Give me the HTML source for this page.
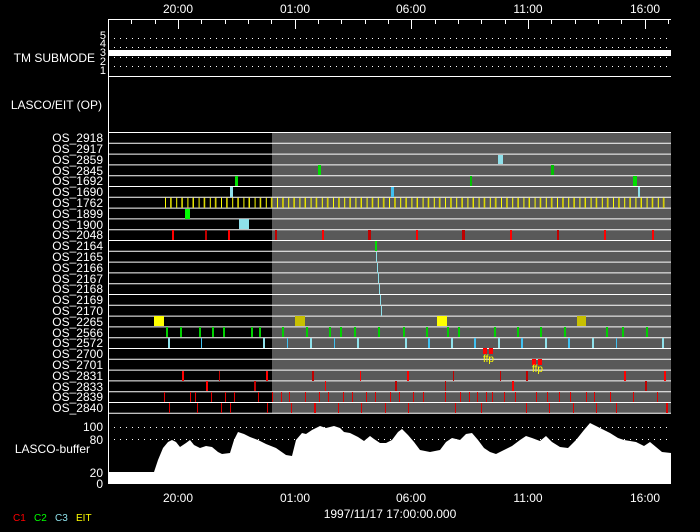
<!DOCTYPE html>
<html><head><style>
html,body{margin:0;padding:0;background:#000;width:700px;height:532px;overflow:hidden}
svg{display:block}
text{font-family:"Liberation Sans",sans-serif;fill:#fff;font-size:12px}
.l{text-anchor:end}
</style></head><body>
<svg width="700" height="532" viewBox="0 0 700 532" xmlns="http://www.w3.org/2000/svg">
<!-- gray region -->
<rect x="272" y="132" width="399" height="281" fill="#595959"/>
<!-- top axis labels -->
<text x="178" y="13" text-anchor="middle">20:00</text>
<text x="295" y="13" text-anchor="middle">01:00</text>
<text x="411" y="13" text-anchor="middle">06:00</text>
<text x="528" y="13" text-anchor="middle">11:00</text>
<text x="645" y="13" text-anchor="middle">16:00</text>
<!-- frame -->
<g stroke="#fff" stroke-width="1" fill="none">
<line x1="108.5" y1="19" x2="108.5" y2="484"/>
<line x1="108" y1="19.5" x2="671" y2="19.5"/>
<line x1="108" y1="76.5" x2="671" y2="76.5"/>
</g>
<!-- top ticks -->
<g stroke="#fff" stroke-width="1">
<path d="M131.5 19v5M155.5 19v5M178.5 19v10M201.5 19v5M225.5 19v5M248.5 19v5M271.5 19v5M295.5 19v10M318.5 19v5M341.5 19v5M365.5 19v5M388.5 19v5M411.5 19v10M435.5 19v5M458.5 19v5M481.5 19v5M505.5 19v5M528.5 19v10M551.5 19v5M575.5 19v5M598.5 19v5M621.5 19v5M645.5 19v10M668.5 19v5"/>
</g>
<!-- submode -->
<g stroke="#fff" stroke-width="1" stroke-dasharray="1 5">
<line x1="114" y1="38.5" x2="671" y2="38.5"/>
<line x1="114" y1="47.5" x2="671" y2="47.5"/>
<line x1="114" y1="57.5" x2="671" y2="57.5"/>
<line x1="114" y1="66.5" x2="671" y2="66.5"/>
</g>
<rect x="108" y="50" width="563" height="6" fill="#fff"/>
<text x="95" y="62" class="l">TM SUBMODE</text>
<g font-size="10">
<text x="106" y="39" class="l" style="font-size:11px">5</text>
<text x="106" y="47" class="l" style="font-size:11px">4</text>
<text x="106" y="56" class="l" style="font-size:11px">3</text>
<text x="106" y="65" class="l" style="font-size:11px">2</text>
<text x="106" y="74" class="l" style="font-size:11px">1</text>
</g>
<text x="102" y="109" class="l">LASCO/EIT (OP)</text>
<!-- row lines -->
<g stroke="#fff" stroke-width="1">
<path d="M108 132.5H671M108 143.3H671M108 154.1H671M108 164.9H671M108 175.7H671M108 186.5H671M108 197.3H671M108 208.1H671M108 218.9H671M108 229.7H671M108 240.5H671M108 251.3H671M108 262.1H671M108 272.9H671M108 283.7H671M108 294.5H671M108 305.3H671M108 316.1H671M108 326.9H671M108 337.7H671M108 348.5H671M108 359.3H671M108 370.1H671M108 380.9H671M108 391.7H671M108 402.5H671M108 413.3H671"/>
</g>
<!-- labels -->
<g class="l">
<text x="103" y="142" class="l">OS_2918</text>
<text x="103" y="153" class="l">OS_2917</text>
<text x="103" y="164" class="l">OS_2859</text>
<text x="103" y="175" class="l">OS_2845</text>
<text x="103" y="185" class="l">OS_1692</text>
<text x="103" y="196" class="l">OS_1690</text>
<text x="103" y="207" class="l">OS_1762</text>
<text x="103" y="218" class="l">OS_1899</text>
<text x="103" y="229" class="l">OS_1900</text>
<text x="103" y="239" class="l">OS_2048</text>
<text x="103" y="250" class="l">OS_2164</text>
<text x="103" y="261" class="l">OS_2165</text>
<text x="103" y="272" class="l">OS_2166</text>
<text x="103" y="283" class="l">OS_2167</text>
<text x="103" y="293" class="l">OS_2168</text>
<text x="103" y="304" class="l">OS_2169</text>
<text x="103" y="315" class="l">OS_2170</text>
<text x="103" y="326" class="l">OS_2265</text>
<text x="103" y="337" class="l">OS_2566</text>
<text x="103" y="347" class="l">OS_2572</text>
<text x="103" y="358" class="l">OS_2700</text>
<text x="103" y="369" class="l">OS_2701</text>
<text x="103" y="380" class="l">OS_2831</text>
<text x="103" y="391" class="l">OS_2833</text>
<text x="103" y="401" class="l">OS_2839</text>
<text x="103" y="412" class="l">OS_2840</text>
</g>
<!-- marks -->
<rect x="498" y="155" width="5" height="9" fill="#8ee0ea"/>
<rect x="318" y="165" width="3" height="10" fill="#00e000"/>
<rect x="551" y="165" width="3" height="10" fill="#00c000"/>
<rect x="235" y="176" width="3" height="10" fill="#00e000"/>
<rect x="470" y="176" width="2" height="10" fill="#00c000"/>
<rect x="633" y="176" width="4" height="10" fill="#00e000"/>
<rect x="230" y="187" width="3" height="10" fill="#8ee0ea"/>
<rect x="391" y="187" width="3" height="10" fill="#40c0f0"/>
<rect x="638" y="187" width="2" height="10" fill="#8ee0ea"/>
<line x1="165" y1="202.7" x2="668" y2="202.7" stroke="#ffff00" stroke-width="10" stroke-dasharray="1 4.6"/>
<line x1="170" y1="202.7" x2="668" y2="202.7" stroke="#c8c000" stroke-width="10" stroke-dasharray="1 10.2"/>
<rect x="185" y="209" width="5" height="10" fill="#00ff00"/>
<rect x="239" y="219" width="10" height="10" fill="#8ee0ea"/>
<g fill="#ff0000">
<rect x="172" y="230" width="2" height="10"/><rect x="205" y="230" width="2" height="10" fill="#c00000"/><rect x="228" y="230" width="2" height="10"/><rect x="275" y="230" width="2" height="10" fill="#c00000"/><rect x="322" y="230" width="2" height="10"/><rect x="368" y="230" width="3" height="10" fill="#c00000"/><rect x="416" y="230" width="2" height="10"/><rect x="462" y="230" width="3" height="10" fill="#c00000"/><rect x="510" y="230" width="2" height="10"/><rect x="557" y="230" width="2" height="10" fill="#c00000"/><rect x="604" y="230" width="2" height="10"/><rect x="652" y="230" width="2" height="10"/>
</g>
<rect x="375" y="241" width="2" height="10" fill="#00e000"/>
<g fill="#8ee0ea">
<rect x="376" y="252" width="1" height="10"/><rect x="377" y="263" width="1" height="10"/><rect x="378" y="273" width="1" height="10"/><rect x="379" y="284" width="1" height="10"/><rect x="380" y="295" width="1" height="10"/><rect x="381" y="306" width="1" height="10"/>
</g>
<rect x="154" y="316" width="10" height="10" fill="#ffff00"/>
<rect x="295" y="316" width="10" height="10" fill="#c8c000"/>
<rect x="437" y="316" width="10" height="10" fill="#ffff00"/>
<rect x="577" y="316" width="9" height="10" fill="#c8c000"/>
<g fill="#00d000">
<rect x="166" y="327" width="2" height="10"/><rect x="180" y="327" width="2" height="10"/><rect x="199" y="327" width="2" height="10"/><rect x="212" y="327" width="2" height="10"/><rect x="223" y="327" width="2" height="10"/><rect x="251" y="327" width="2" height="10"/><rect x="259" y="327" width="2" height="10"/><rect x="282" y="327" width="2" height="10"/><rect x="306" y="327" width="2" height="10"/><rect x="329" y="327" width="2" height="10"/><rect x="340" y="327" width="2" height="10"/><rect x="354" y="327" width="2" height="10"/><rect x="378" y="327" width="2" height="10"/><rect x="403" y="327" width="2" height="10"/><rect x="426" y="327" width="2" height="10"/><rect x="447" y="327" width="2" height="10"/><rect x="458" y="327" width="2" height="10"/><rect x="494" y="327" width="2" height="10"/><rect x="517" y="327" width="2" height="10"/><rect x="540" y="327" width="2" height="10"/><rect x="564" y="327" width="2" height="10"/><rect x="606" y="327" width="2" height="10"/><rect x="622" y="327" width="2" height="10"/><rect x="646" y="327" width="2" height="10"/>
</g>
<g fill="#8ee0ea">
<rect x="168" y="338" width="2" height="10"/><rect x="201" y="338" width="1" height="10" fill="#40c0f0"/><rect x="263" y="338" width="2" height="10"/><rect x="287" y="338" width="1" height="10" fill="#40c0f0"/><rect x="310" y="338" width="2" height="10"/><rect x="334" y="338" width="1" height="10" fill="#40c0f0"/><rect x="357" y="338" width="2" height="10"/><rect x="405" y="338" width="2" height="10"/><rect x="428" y="338" width="2" height="10" fill="#40c0f0"/><rect x="451" y="338" width="2" height="10"/><rect x="474" y="338" width="2" height="10" fill="#40c0f0"/><rect x="498" y="338" width="2" height="10"/><rect x="521" y="338" width="2" height="10" fill="#40c0f0"/><rect x="545" y="338" width="2" height="10"/><rect x="568" y="338" width="2" height="10" fill="#40c0f0"/><rect x="592" y="338" width="2" height="10"/><rect x="616" y="338" width="1" height="10" fill="#40c0f0"/><rect x="662" y="338" width="2" height="10"/>
</g>
<rect x="483" y="348" width="4" height="6" fill="#ff0000"/><rect x="489" y="348" width="4" height="6" fill="#ff0000"/>
<text x="483" y="362" style="fill:#ffff00;font-size:10px">ffp</text>
<rect x="532" y="359" width="4" height="6" fill="#ff0000"/><rect x="538" y="359" width="4" height="6" fill="#ff0000"/>
<text x="532" y="372" style="fill:#ffff00;font-size:10px">ffp</text>
<g fill="#ff0000">
<rect x="182" y="371" width="2" height="10"/><rect x="219" y="371" width="1" height="10" fill="#c00000"/><rect x="266" y="371" width="2" height="10"/><rect x="312" y="371" width="2" height="10" fill="#c00000"/><rect x="360" y="371" width="1" height="10"/><rect x="407" y="371" width="2" height="10"/><rect x="453" y="371" width="1" height="10" fill="#c00000"/><rect x="500" y="371" width="1" height="10" fill="#c00000"/><rect x="526" y="371" width="2" height="10" fill="#c00000"/><rect x="664" y="371" width="2" height="10"/><rect x="624" y="371" width="2" height="10" fill="#ff0000"/>
<rect x="206" y="381" width="2" height="10"/><rect x="254" y="381" width="2" height="10" fill="#c00000"/><rect x="325" y="381" width="1" height="10"/><rect x="395" y="381" width="2" height="10" fill="#c00000"/><rect x="445" y="381" width="1" height="10" fill="#c00000"/><rect x="512" y="381" width="2" height="10"/><rect x="645" y="381" width="2" height="10" fill="#c00000"/>
</g>
<g fill="#e00000">
<rect x="164" y="392" width="1" height="10"/><rect x="190" y="392" width="1" height="10"/><rect x="195" y="392" width="1" height="10"/><rect x="211" y="392" width="1" height="10"/><rect x="225" y="392" width="1" height="10"/><rect x="234" y="392" width="1" height="10"/><rect x="258" y="392" width="1" height="10"/><rect x="272" y="392" width="1" height="10"/><rect x="281" y="392" width="1" height="10"/><rect x="289" y="392" width="1" height="10"/><rect x="305" y="392" width="1" height="10"/><rect x="319" y="392" width="1" height="10"/><rect x="328" y="392" width="1" height="10"/><rect x="343" y="392" width="1" height="10"/><rect x="352" y="392" width="1" height="10"/><rect x="366" y="392" width="1" height="10"/><rect x="375" y="392" width="1" height="10"/><rect x="390" y="392" width="1" height="10"/><rect x="399" y="392" width="1" height="10"/><rect x="413" y="392" width="1" height="10"/><rect x="423" y="392" width="1" height="10"/><rect x="445" y="392" width="1" height="10"/><rect x="460" y="392" width="1" height="10"/><rect x="469" y="392" width="1" height="10"/><rect x="477" y="392" width="1" height="10"/><rect x="486" y="392" width="1" height="10"/><rect x="492" y="392" width="1" height="10"/><rect x="504" y="392" width="1" height="10"/><rect x="515" y="392" width="1" height="10"/><rect x="536" y="392" width="1" height="10"/><rect x="547" y="392" width="1" height="10"/><rect x="559" y="392" width="1" height="10"/><rect x="570" y="392" width="1" height="10"/><rect x="586" y="392" width="1" height="10"/><rect x="594" y="392" width="1" height="10"/><rect x="610" y="392" width="1" height="10"/><rect x="633" y="392" width="1" height="10"/><rect x="657" y="392" width="1" height="10"/>
<rect x="169" y="403" width="1" height="10"/><rect x="197" y="403" width="1" height="10"/><rect x="221" y="403" width="1" height="10"/><rect x="230" y="403" width="1" height="10"/><rect x="267" y="403" width="1" height="10"/><rect x="291" y="403" width="1" height="10"/><rect x="314" y="403" width="2" height="10"/><rect x="338" y="403" width="1" height="10"/><rect x="361" y="403" width="1" height="10"/><rect x="385" y="403" width="1" height="10"/><rect x="408" y="403" width="1" height="10"/><rect x="455" y="403" width="1" height="10"/><rect x="481" y="403" width="1" height="10"/><rect x="526" y="403" width="1" height="10"/><rect x="549" y="403" width="1" height="10"/><rect x="573" y="403" width="1" height="10"/><rect x="596" y="403" width="1" height="10"/><rect x="616" y="403" width="1" height="10"/><rect x="666" y="403" width="2" height="10"/>
</g>
<!-- buffer -->
<g stroke="#fff" stroke-width="1" stroke-dasharray="1 5">
<line x1="114" y1="427.5" x2="671" y2="427.5"/>
<line x1="114" y1="439.5" x2="671" y2="439.5"/>
</g>
<polygon fill="#fff" points="109,484 109,472 154,472 158,460 163,448 168,442 172,440 176,442 180,447 186,443 190,440 194,445 200,448 206,446 212,447 218,452 222,454 230,453 234,440 238,432 244,434 250,437 258,440 266,444 276,448 286,455 292,456 296,440 302,433 306,434 312,430 320,426 326,428 334,426 340,428 344,432 350,433 358,437 364,441 370,436 374,439 380,443 386,443 392,440 398,432 402,429 408,435 414,442 420,450 430,452 440,450 446,442 452,438 460,440 466,434 472,433 478,440 484,448 490,452 496,454 504,450 512,446 520,440 526,436 532,438 540,441 546,436 552,442 560,447 568,448 576,440 584,430 590,423 596,426 604,430 610,433 618,438 624,440 630,441 636,442 644,446 650,442 656,447 662,452 671,453 671,484"/>
<text x="103" y="431" class="l">100</text>
<text x="103" y="444" class="l">80</text>
<text x="90" y="453" class="l">LASCO-buffer</text>
<text x="103" y="477" class="l">20</text>
<text x="103" y="488" class="l">0</text>
<!-- bottom axis -->
<text x="178" y="502" text-anchor="middle">20:00</text>
<text x="295" y="502" text-anchor="middle">01:00</text>
<text x="411" y="502" text-anchor="middle">06:00</text>
<text x="528" y="502" text-anchor="middle">11:00</text>
<text x="645" y="502" text-anchor="middle">16:00</text>
<text x="390" y="518" text-anchor="middle">1997/11/17 17:00:00.000</text>
<text x="13" y="521" style="fill:#ff0000;font-size:10px">C1</text>
<text x="34" y="521" style="fill:#00ff00;font-size:10px">C2</text>
<text x="55" y="521" style="fill:#8ee0ea;font-size:10px">C3</text>
<text x="76" y="521" style="fill:#ffff00;font-size:10px">EIT</text>
</svg>
</body></html>
